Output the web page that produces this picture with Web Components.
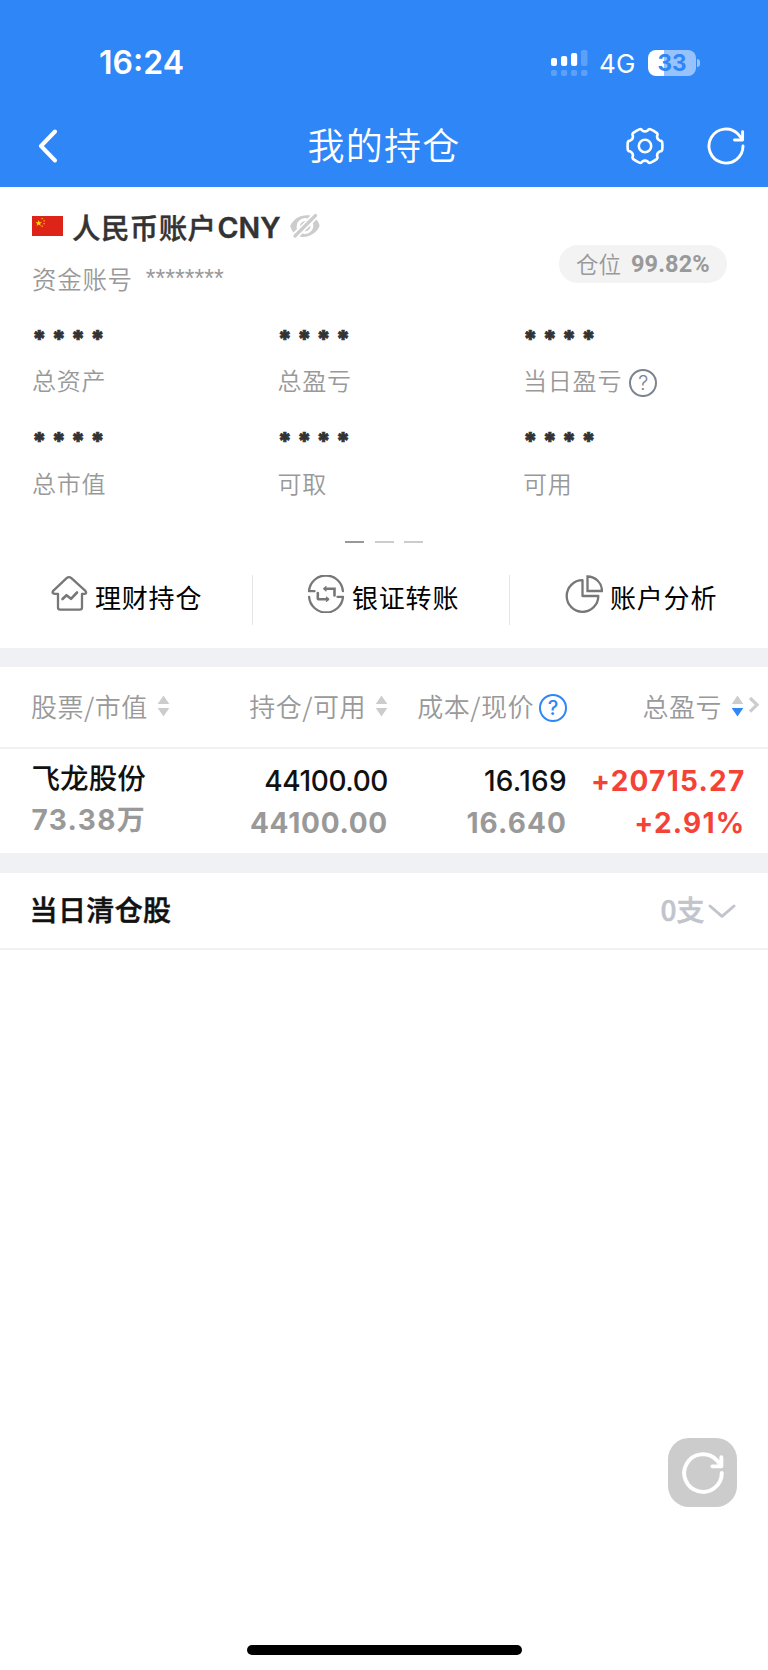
<!DOCTYPE html>
<html lang="zh-CN">
<head>
<meta charset="utf-8">
<title>我的持仓</title>
<style>
html,body{margin:0;padding:0;background:#fff}
body{font-family:"Noto Sans CJK SC",sans-serif;--num:"Inter","Noto Sans CJK SC",sans-serif;--arial:"Liberation Sans",Arial,sans-serif}
</style>
</head>
<body>
<holdings-app></holdings-app>
<script>
const define = (name, render) => customElements.define(name, class extends HTMLElement {
  constructor() { super(); this.attachShadow({mode: 'open'}); }
  connectedCallback() {
    this.shadowRoot.innerHTML = '<style>*{box-sizing:border-box}:host{display:block;box-sizing:border-box;white-space:nowrap}svg{display:block}</style>' +
      (typeof render === 'function' ? render(this) : render);
  }
});

const gearPath = () => {
  const pt = (deg, r) => { const a = deg * Math.PI / 180; return (19 + r * Math.cos(a)).toFixed(2) + ' ' + (19 + r * Math.sin(a)).toFixed(2); };
  let d = '';
  for (let k = 0; k < 6; k++) {
    const t = k * 60;
    d += (k ? 'L' : 'M') + pt(t - 20, 15.8) + 'Q' + pt(t - 18, 17.5) + ' ' + pt(t - 13, 17.6);
    d += 'Q' + pt(t, 17.7) + ' ' + pt(t + 13, 17.6) + 'Q' + pt(t + 18, 17.5) + ' ' + pt(t + 20, 15.8) + 'Q' + pt(t + 30, 13.6) + ' ' + pt(t + 40, 15.8);
  }
  return d + 'Z';
};
const refresh = '<path d="M36 19A17 17 0 1 1 31.3 7.3L34 10.6"/><path d="M35.6 4.8V13H27.5"/>';
const icons = {
  back: [20, 36, '<path d="M18 3.5 4 18l14 14.5" stroke-width="4"/>'],
  gear: [38, 38, `<path d="${gearPath()}" stroke-width="2.6"/><circle cx="19" cy="19" r="6.2" stroke-width="2.6"/>`],
  refresh: [38, 38, `<g stroke-width="2.9">${refresh}</g>`],
  eye: [32, 26, '<g stroke="none" fill="currentColor"><path d="M1.2 13C5 5 13 1 21.5 2.6L18.6 5.4A8.6 8.6 0 0 0 8 16L4.4 19.4Q2 16.4 1.2 13Z"/><path d="M30.6 13C27 21 19 25 10.500 23.600L13.4 20.600A8.600 8.600 0 0 0 24 10L27.600 6.500Q30 9.600 30.600 13Z"/><path d="M11 13.5A5.500 5.500 0 0 1 16.500 8Z"/><path d="M21.500 12.500A5.500 5.500 0 0 1 15.500 18.300Z"/></g><path d="M6 23 26.500 2.500" stroke-width="3.200"/>'],
  house: [38, 38, '<path d="M16.6 3.200Q19 1 21.400 3.200L35.400 15.800Q37.200 18.300 34.500 18.900H32V32.500Q32 34.600 29.800 34.600H10.200Q8 34.600 8 32.500V18.900H5Q1.300 18.300 3.200 15.800Z" stroke-width="2.300"/><path d="m12.500 24 4-3.800 4.500 3.600 6-6.300" stroke-width="2.600"/>'],
  transfer: [38, 38, '<path d="M2 16.200H7.500M2 16.200A17 17 0 0 1 35.900 16.200M36 21.800H30.500M36 21.800A17 17 0 0 1 2.100 21.800" stroke-width="2.300"/><path d="M18 13.800H27.500V20.500M20.500 24.300H11.500Q10.800 24.300 10.800 23.500V18" stroke-width="2.600" stroke-linejoin="miter"/><path d="M19 11.800 16.800 13.800 19 15.800M19.500 22.300l2.200 2-2.200 2" stroke-width="1.400"/>'],
  pie: [38, 38, '<path d="M17.500 5.200A15.800 15.800 0 1 0 33.300 21H17.500Z" stroke-width="2.300"/><path d="M22.500 1.500A14.500 14.500 0 0 1 37 16H22.500Z" stroke-width="2.300" stroke-linejoin="miter"/>'],
  sort: [13, 22, '<path d="M6.500 0.500 12.300 9H.7Z" fill="#ccc" stroke="none"/><path d="M6.500 21.500 12.300 13H.7Z" fill="var(--down,#ccc)" stroke="none"/>'],
  right: [12, 18, '<path d="m2 2 7 6.800L2 15.600" stroke-width="3.200" stroke-linecap="butt" stroke-linejoin="miter"/>'],
  down: [28, 16, '<path d="m2 3 12 10.300L26 3" stroke-width="2.900"/>']
};
define('app-icon', el => {
  const [w, h, body] = icons[el.getAttribute('name')];
  return `<style>:host{flex:none;width:${w}px;height:${h}px}</style><svg width="${w}" height="${h}" viewBox="0 0 ${w} ${h}" fill="none" stroke="currentColor" stroke-linecap="round" stroke-linejoin="round">${body}</svg>`;
});
define('help-mark', `<style>:host{flex:none;width:28px;height:28px;border:2px solid currentColor;border-radius:50%;font-family:var(--num);font-size:20px;line-height:24px;text-align:center}</style><slot></slot>`);

define('status-bar', `<style>
:host{display:flex;align-items:center;height:104px;padding:22px 68px 0 99px;color:#fff;font-family:var(--num)}
.time{font-size:32px;font-weight:600;line-height:40px;flex:1}
.net{font-size:26px;font-weight:400;line-height:32px;margin:2px 11px 0 11px;width:38px;letter-spacing:.3px}
.bat{width:48px;height:26px;border-radius:8px;background:linear-gradient(90deg,#fff 33.3%,#97c2fb 33.3%);color:#2e86f7;font-size:22.500px;font-weight:700;line-height:26px;text-align:center}
.nub{width:3px;height:8px;border-radius:0 4px 4px 0;background:#97c2fb;margin-left:1px}
</style><span class="time">16:24</span>
<svg width="38" height="28" viewBox="0 0 38 28" fill="#fff"><rect x="1" y="9" width="6" height="8" rx="2"/><rect x="11" y="7" width="6.200" height="10" rx="2"/><rect x="21" y="4" width="6.200" height="13" rx="2"/><g opacity=".22"><rect x="31" y="1" width="6.500" height="16" rx="2"/><rect x="1" y="21" width="6" height="6" rx="2"/><rect x="11" y="21" width="6.200" height="6" rx="2"/><rect x="21" y="21" width="6.200" height="6" rx="2"/><rect x="31" y="21" width="6.500" height="6" rx="2"/></g></svg>
<span class="net">4G</span><span class="bat">33</span><i class="nub"></i>`);

define('nav-bar', `<style>
:host{display:grid;grid-template-columns:1fr auto 1fr;height:83px;padding:0 23px 0 37px;color:#fff;align-items:center}
.title{font-size:37px;font-weight:350;line-height:50px;letter-spacing:1.300px;margin:0 14px 3px 0}
.right{display:flex;justify-content:flex-end;gap:43px}
</style><app-icon name="back"></app-icon><span class="title"><slot></slot></span><span class="right"><app-icon name="gear"></app-icon><app-icon name="refresh"></app-icon></span>`);

define('china-flag', `<style>:host{width:31px;height:20px}</style><svg width="31" height="20" viewBox="0 0 31 20"><path fill="#de2318" d="M0 0h31v20H0z"/><path fill="#fd0" d="m6.700 4 .9 2.200h2.400L8.100 7.700l.7 2.300-2.100-1.400L4.600 10l.7-2.300L3.500 6.200h2.300z"/><path fill="#f3a311" d="M9.500 2h1.500v1.300H9.500zM11.500 4.200H13v1.300h-1.500zM11.500 7H13v1.300h-1.500zM9.500 9.600H11v1.300H9.500z"/></svg>`);

define('metric-item', `<style>
.v{height:30px;padding-top:4.500px;font:900 24px/30px var(--num);color:#333;-webkit-text-stroke:.700px #333;letter-spacing:4.800px}
.l{margin-top:14px;display:flex;align-items:center;height:32px;font-size:24px;font-weight:350;line-height:32px;letter-spacing:.800px;color:#999}
</style><div class="v">****</div><div class="l"><slot></slot></div>`);

define('page-dots', `<style>:host{display:flex;justify-content:center;gap:10.500px}i{width:19px;height:2px;background:#ccc}i:first-of-type{background:#999}</style><i></i><i></i><i></i>`);

define('quick-link', el => `<style>
:host{display:flex;height:50px;align-items:center;gap:7px;padding-bottom:7px;color:#777;background:linear-gradient(#e5e5e5,#e5e5e5) right/1.500px 100% no-repeat}
:host(:last-child){background:none}
app-icon{margin-bottom:5px}span{font-size:26px;font-weight:400;line-height:36px;letter-spacing:.8px;color:#000}
</style><app-icon name="${el.getAttribute('icon')}"></app-icon><span><slot></slot></span>`);

define('account-card', `<style>
:host{height:461px;padding-top:20px}
.head{display:flex;justify-content:space-between;padding:0 41px 0 32px}
.name{display:flex;height:40px;align-items:center;color:#333;font-size:28.500px;font-weight:500;line-height:40px;letter-spacing:.4px;-webkit-text-stroke:.4px #333}
.name b{font:600 28.500px/40px var(--num);letter-spacing:0;margin:2px 0 0 1px}
china-flag{margin:-2px 9px 0 0}app-icon{margin:-3px 0 0 8px;color:#ccc}
.no{margin-top:16px;height:32px;font-size:24.500px;font-weight:350;line-height:32px;letter-spacing:.700px;color:#999;display:flex}
.no span{font:400 25px/32px var(--arial);letter-spacing:0;margin:-1px 0 0 13px}
.pill{margin-top:38px;width:168px;height:38px;border-radius:19px;background:#f3f3f3;color:#999;display:flex;align-items:center;padding:0 0 3px 17px;font-size:22.500px;font-weight:350;line-height:34px}
.pill b{font:700 23.500px/38px Roboto,sans-serif;letter-spacing:.1px;margin:2px 0 0 10px}
.grid{display:grid;grid-template-columns:repeat(3,245.500px);row-gap:26.500px;margin:25px 0 42.500px 32px}
help-mark{color:#7b8490;margin:5px 0 0 7px;letter-spacing:0}
.links{display:grid;grid-template-columns:253px 257px 258px;margin-top:32px}
</style>
<div class="head"><div><div class="name"><china-flag></china-flag>人民币账户<b>CNY</b><app-icon name="eye"></app-icon></div><div class="no">资金账号<span>********</span></div></div><div class="pill">仓位<b>99.82%</b></div></div>
<div class="grid"><metric-item>总资产</metric-item><metric-item>总盈亏</metric-item><metric-item>当日盈亏<help-mark>?</help-mark></metric-item><metric-item>总市值</metric-item><metric-item>可取</metric-item><metric-item>可用</metric-item></div>
<page-dots></page-dots>
<div class="links"><quick-link icon="house" style="padding-left:50px">理财持仓</quick-link><quick-link icon="transfer" style="padding-left:54px">银证转账</quick-link><quick-link icon="pie" style="padding-left:55px">账户分析</quick-link></div>`);

define('holdings-table', `<style>
:host{border-top:19px solid #eff1f4;height:205px}
.h,.r{display:grid;grid-template-columns:190px 198px 179px 201px}
.h{height:82px;border-bottom:2px solid #f1f1f1;font-size:26px;font-weight:350;line-height:36px;letter-spacing:.500px;color:#999;padding-bottom:2px}
.h div{display:flex;align-items:center;justify-content:flex-end}
.h div:first-of-type{justify-content:flex-start;padding-left:31px}
.h div:last-of-type{padding-right:8px;--down:#2e86f7}
.h app-icon{margin-left:9px}.h app-icon[name=right]{margin:-3px 0 0 4px;color:#ccc}
help-mark{color:#2e86f7;margin:3px 0 0 5px;letter-spacing:0;font-weight:500}
.r div{display:flex;flex-direction:column;gap:2px;padding-top:11.500px;text-align:right;font:500 28px/40px var(--num);letter-spacing:-.4px;color:#111}
.r .g{color:#999;font-weight:700;letter-spacing:.750px}
.r .cost{letter-spacing:.3px}.r .cost .g{letter-spacing:1.100px}
.r .first{padding:7.500px 0 0 31.500px;text-align:left;gap:3px}
.first .stock{font-family:"Noto Sans CJK SC",sans-serif;font-size:28.500px;letter-spacing:.1px}
.first .g{letter-spacing:1.400px}
.r .red{padding-right:22.500px;color:#f44336;font-weight:700;letter-spacing:1.250px}
</style>
<div class="h"><div>股票/市值<app-icon name="sort"></app-icon></div><div>持仓/可用<app-icon name="sort"></app-icon></div><div>成本/现价<help-mark>?</help-mark></div><div>总盈亏<app-icon name="sort"></app-icon><app-icon name="right"></app-icon></div></div>
<div class="r"><div class="first"><span class="stock">飞龙股份</span><span class="g">73.38万</span></div><div><span>44100.00</span><span class="g">44100.00</span></div><div class="cost"><span>16.169</span><span class="g">16.640</span></div><div class="red"><span>+20715.27</span><span>+2.91%</span></div></div>`);

define('cleared-row', `<style>
:host{display:flex;align-items:center;justify-content:space-between;border-top:20px solid #eff1f4;border-bottom:2px solid #f1f1f1;height:97px;padding:0 32px 3px 29.500px;font-size:28px;font-weight:500;line-height:40px}
.t{color:#111;letter-spacing:.4px;-webkit-text-stroke:.5px #111}.c{display:flex;align-items:center;color:#c0c4cc;gap:3.500px;-webkit-text-stroke:.5px #c0c4cc}app-icon{margin-top:3px}
</style><span class="t"><slot></slot></span><span class="c">0支<app-icon name="down"></app-icon></span>`);

define('refresh-fab', `<style>:host{position:absolute;left:668px;top:1438px;width:69px;height:69px;border-radius:21px;background:#ccc;color:#fff;padding:13.500px}svg{overflow:visible}</style><svg width="42" height="42" viewBox="0 0 38 38" fill="none" stroke="currentColor" stroke-width="3.600" stroke-linecap="round" stroke-linejoin="round">${refresh}</svg>`);

define('holdings-app', `<style>
:host{position:relative;display:flex;flex-direction:column;width:768px;height:1670px;background:#fff;overflow:hidden}
header{height:187px;background:#2e86f7;flex:none}
.home{width:275px;height:10px;border-radius:5px;background:#000;margin:auto auto 15.500px}
</style><header><status-bar></status-bar><nav-bar>我的持仓</nav-bar></header><account-card></account-card><holdings-table></holdings-table><cleared-row>当日清仓股</cleared-row><div class="home"></div><refresh-fab></refresh-fab>`);
</script>
</body>
</html>
